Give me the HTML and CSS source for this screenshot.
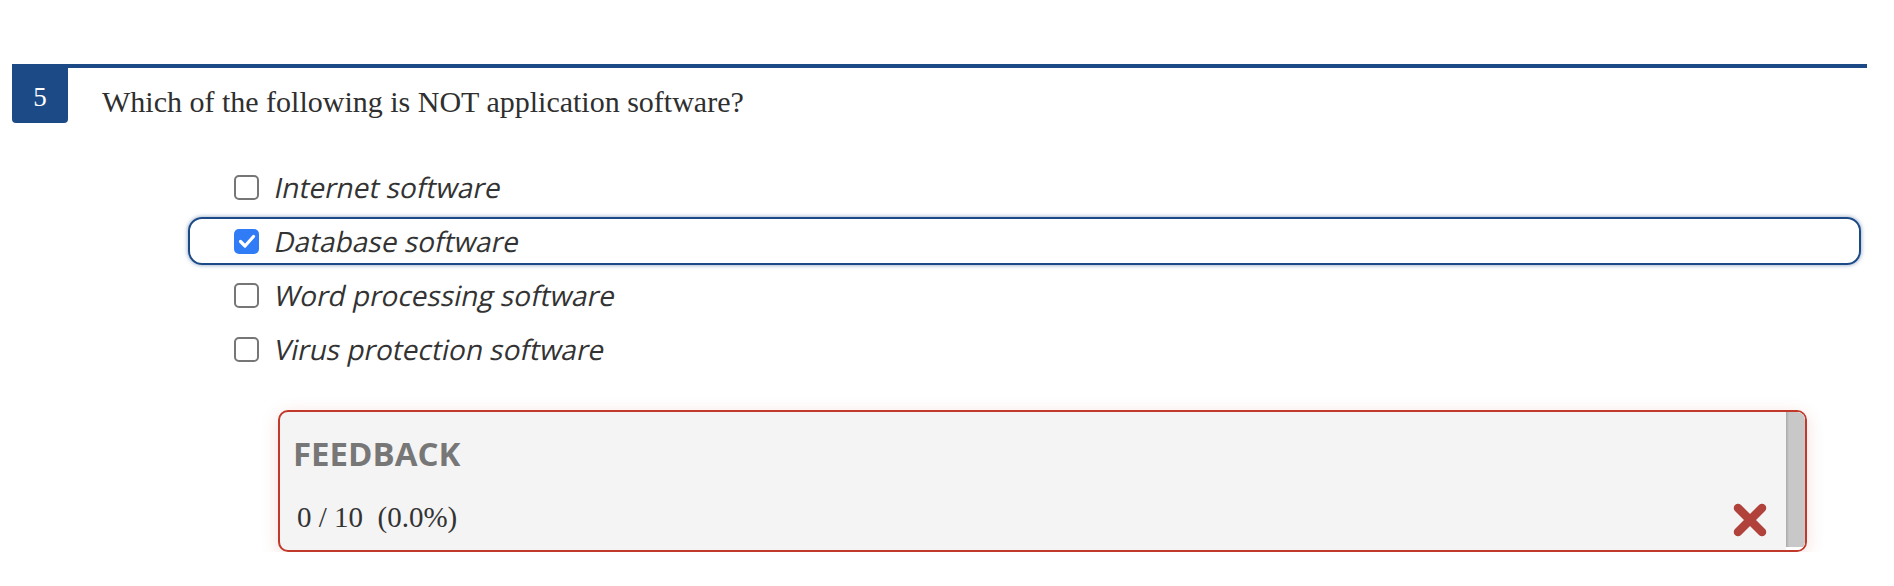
FILE: index.html
```html
<!DOCTYPE html>
<html lang="en">
<head>
<meta charset="utf-8">
<title>Question 5</title>
<link rel="stylesheet" href="styles.css">
</head>
<body>
<div class="question">
  <div class="q-head">
    <div class="badge">5</div>
    <div class="q-text">Which of the following is NOT application software?</div>
  </div>
  <div class="options">
    <label class="option">
      <span class="box"></span>
      <span class="opt-text">Internet software</span>
    </label>
    <label class="option selected">
      <span class="box checked"><svg viewBox="0 0 24 24" width="24" height="24"><polyline points="5.5,12.5 10,17 18.5,7.5" fill="none" stroke="#fff" stroke-width="3.2" stroke-linecap="round" stroke-linejoin="round"/></svg></span>
      <span class="opt-text">Database software</span>
    </label>
    <label class="option">
      <span class="box"></span>
      <span class="opt-text">Word processing software</span>
    </label>
    <label class="option">
      <span class="box"></span>
      <span class="opt-text">Virus protection software</span>
    </label>
    <div class="feedback">
      <div class="fb-content">
        <div class="fb-title">FEEDBACK</div>
        <div class="fb-row">
          <div class="fb-score">0 / 10&nbsp; (0.0%)</div>
          <svg class="fb-x" viewBox="0 0 36 36" width="36" height="36"><line x1="6" y1="6" x2="30" y2="30" stroke="#b1423b" stroke-width="8.5" stroke-linecap="round"/><line x1="30" y1="6" x2="6" y2="30" stroke="#b1423b" stroke-width="8.5" stroke-linecap="round"/></svg>
        </div>
      </div>
      <div class="fb-bar"><div class="fb-thumb"></div></div>
    </div>
  </div>
</div>
</body>
</html>
```

FILE: styles.css
```css
* { box-sizing: border-box; }
html, body { margin: 0; padding: 0; background: #fff; }
body { font-family: "Liberation Serif", "DejaVu Serif", serif; color: #333; }

.question {
  margin: 64px 27px 0 12px;
  border-top: 4px solid #1c4a87;
}

.q-head {
  display: flex;
  align-items: flex-start;
}

.badge {
  width: 56px;
  height: 59px;
  margin-top: -4px;
  background: #1c4a87;
  color: #fff;
  border-radius: 4px 0 4px 4px;
  display: flex;
  align-items: center;
  justify-content: center;
  padding-top: 7px;
  font-family: "Liberation Serif", serif;
  font-size: 27px;
}

.q-text {
  margin-left: 34px;
  margin-top: 16px;
  font-size: 30px;
  line-height: 36px;
  color: #2f2f2f;
}

.options {
  margin: 40px 6px 0 176px;
}

.option {
  display: flex;
  align-items: center;
  height: 48px;
  border: 2px solid transparent;
  border-radius: 14px;
  padding-left: 44px;
  margin-bottom: 6px;
  gap: 14px;
}

.option.selected {
  border-color: #1c4a87;
  box-shadow: 0 0 4px rgba(28, 74, 135, 0.55);
}

.box {
  width: 25px;
  height: 25px;
  flex: none;
  border: 2px solid #767676;
  border-radius: 5px;
  background: #fff;
  display: flex;
  align-items: center;
  justify-content: center;
}

.box.checked {
  border: none;
  background: #2f7cf6;
}

.opt-text {
  display: inline-block;
  font-family: "Open Sans", sans-serif;
  font-size: 28px;
  line-height: 36px;
  color: #333;
  transform: skewX(-12deg);
  transform-origin: 0 80%;
}

.feedback {
  margin: 37px 54px 0 90px;
  height: 142px;
  border: 2px solid #c0392b;
  border-radius: 10px;
  background: #f4f4f4;
  box-shadow: 0 4px 18px rgba(192, 57, 43, 0.16);
  display: flex;
  overflow: hidden;
}

.fb-content {
  flex: 1;
  padding: 20px 18px 0 13px;
}

.fb-title {
  font-family: "Open Sans", sans-serif;
  font-weight: 700;
  font-size: 33px;
  line-height: 44px;
  color: #777;
}

.fb-row {
  margin-top: 20px;
  display: flex;
  align-items: center;
  justify-content: space-between;
}

.fb-score {
  padding-left: 4px;
  font-size: 29px;
  line-height: 36px;
  color: #333;
}

.fb-x {
  margin-top: 6px;
  display: block;
}

.fb-bar {
  width: 20px;
  flex: none;
  background: #fff;
  margin-right: -1px;
}

.fb-thumb {
  height: calc(100% - 3px);
  background: linear-gradient(to right, #a9a9a9, #c8c8c8 3px);
}
```
